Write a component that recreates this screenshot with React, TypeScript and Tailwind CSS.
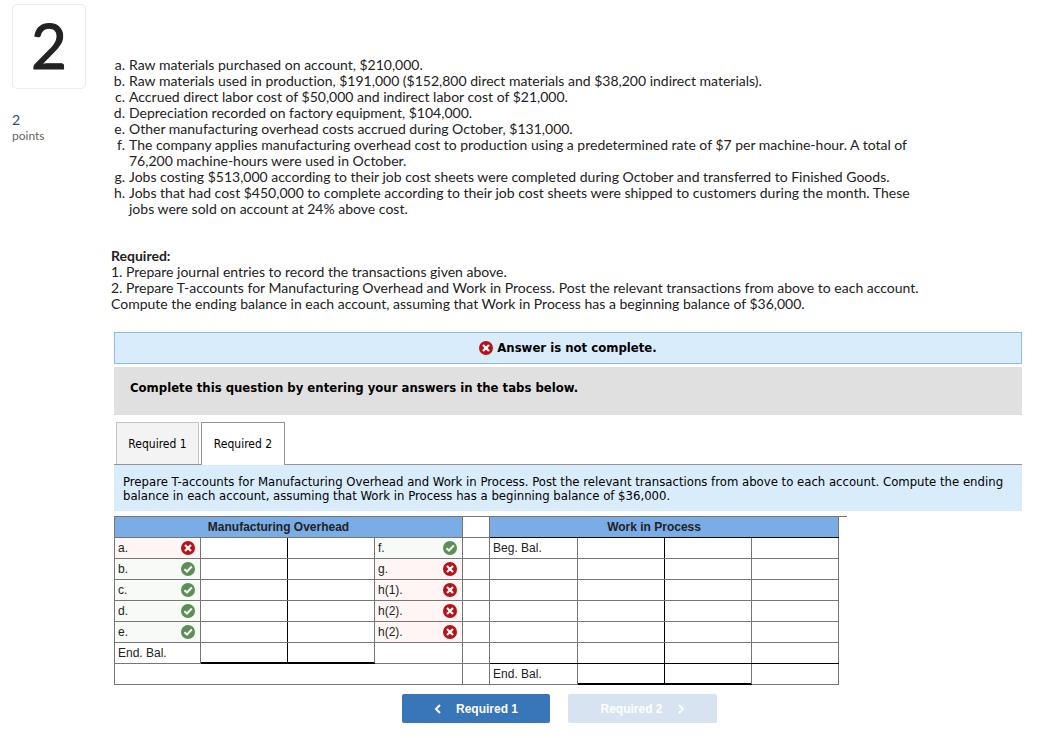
import { clsx } from "clsx";

const transactions = [
  { id: "a", text: "Raw materials purchased on account, $210,000." },
  {
    id: "b",
    text: "Raw materials used in production, $191,000 ($152,800 direct materials and $38,200 indirect materials).",
  },
  {
    id: "c",
    text: "Accrued direct labor cost of $50,000 and indirect labor cost of $21,000.",
  },
  { id: "d", text: "Depreciation recorded on factory equipment, $104,000." },
  {
    id: "e",
    text: "Other manufacturing overhead costs accrued during October, $131,000.",
  },
  {
    id: "f",
    text: "The company applies manufacturing overhead cost to production using a predetermined rate of $7 per machine-hour. A total of 76,200 machine-hours were used in October.",
  },
  {
    id: "g",
    text: "Jobs costing $513,000 according to their job cost sheets were completed during October and transferred to Finished Goods.",
  },
  {
    id: "h",
    text: "Jobs that had cost $450,000 to complete according to their job cost sheets were shipped to customers during the month. These jobs were sold on account at 24% above cost.",
  },
];

const rows = [
  { left: "a.", leftOk: false, right: "f.", rightOk: true, wip: "Beg. Bal." },
  { left: "b.", leftOk: true, right: "g.", rightOk: false, wip: "" },
  { left: "c.", leftOk: true, right: "h(1).", rightOk: false, wip: "" },
  { left: "d.", leftOk: true, right: "h(2).", rightOk: false, wip: "" },
  { left: "e.", leftOk: true, right: "h(2).", rightOk: false, wip: "" },
];

function Mark({ ok }: { ok: boolean }) {
  return (
    <svg
      viewBox="0 0 14 14"
      className="h-3.5 w-3.5 shrink-0"
      role="img"
      aria-label={ok ? "Correct" : "Incorrect"}
    >
      <circle cx="7" cy="7" r="7" fill={ok ? "#5b8f55" : "#b61217"} />
      <path
        d={ok ? "M3.4 7.2 L6 9.5 L10.8 4.5" : "M4 4 L10 10 M10 4 L4 10"}
        fill="none"
        stroke="#fff"
        strokeWidth={ok ? "2" : "2.2"}
      />
    </svg>
  );
}

function GradedCell({ label, ok }: { label: string; ok: boolean }) {
  return (
    <td
      className={clsx(
        "border border-[#767676] pl-[3px] pr-[5px]",
        ok ? "bg-[#f7faf6]" : "bg-[#fff5f4]"
      )}
    >
      <div className="flex items-center justify-between">
        {label}
        <Mark ok={ok} />
      </div>
    </td>
  );
}

function TAccounts() {
  return (
    <table className="w-[732px] table-fixed border-collapse font-['Liberation_Sans',Arial,sans-serif] text-xs text-[#222]">
      <colgroup>
        <col className="w-[86px]" />
        <col className="w-[87px]" />
        <col className="w-[87px]" />
        <col className="w-[88px]" />
        <col className="w-[27px]" />
        <col className="w-[88px]" />
        <col className="w-[87px]" />
        <col className="w-[87px]" />
        <col className="w-[87px]" />
        <col className="w-[8px]" />
      </colgroup>
      <thead>
        <tr className="h-[21px]">
          <th colSpan={4} className="border border-[#767676] bg-[#7aace6] pr-5">
            Manufacturing Overhead
          </th>
          <td className="border border-[#767676]" />
          <th
            colSpan={4}
            className="border border-[#767676] border-b-black bg-[#7aace6] pr-5"
          >
            Work in Process
          </th>
          <td className="border-t border-[#767676]" />
        </tr>
      </thead>
      <tbody>
        {rows.map((row, i) => (
          <tr key={i} className="h-[21px]">
            <GradedCell label={row.left} ok={row.leftOk} />
            <td className="border border-[#767676] border-r-black" />
            <td className="border border-[#767676] border-l-black" />
            <GradedCell label={row.right} ok={row.rightOk} />
            <td className="border border-[#767676]" />
            <td className="border border-[#767676] pl-[3px]">{row.wip}</td>
            <td className="border border-[#767676] border-r-black" />
            <td className="border border-[#767676] border-l-black" />
            <td className="border border-[#767676]" />
            <td />
          </tr>
        ))}
        <tr className="h-[21px]">
          <td className="border border-[#767676] border-t-black pl-[3px]">
            End. Bal.
          </td>
          <td className="border border-black border-l-[#767676] shadow-[inset_0_-1px_0_#000]" />
          <td className="border border-black border-r-[#767676] shadow-[inset_0_-1px_0_#000]" />
          <td className="border border-[#767676] border-t-black" />
          <td className="border border-[#767676]" />
          <td className="border border-[#767676] border-b-black" />
          <td className="border border-[#767676] border-r-black border-b-black" />
          <td className="border border-[#767676] border-l-black border-b-black" />
          <td className="border border-[#767676] border-b-black" />
          <td />
        </tr>
        <tr className="h-[21px]">
          <td colSpan={4} className="border border-[#767676]" />
          <td className="border border-[#767676]" />
          <td className="border border-[#767676] border-t-black pl-[3px]">
            End. Bal.
          </td>
          <td className="border border-black border-l-[#767676] shadow-[inset_0_-1px_0_#000]" />
          <td className="border border-black border-r-[#767676] shadow-[inset_0_-1px_0_#000]" />
          <td className="border border-[#767676] border-t-black" />
          <td />
        </tr>
      </tbody>
    </table>
  );
}

export default function App() {
  return (
    <div className="flex bg-white font-['Lato',sans-serif] text-[#222] [font-variant-ligatures:none]">
      <aside className="w-[111px] shrink-0 pl-3 pt-1">
        <div className="flex h-[85px] w-[74px] items-center justify-center rounded-[5px] border border-[#ececec] pb-1 text-[62px] leading-none [-webkit-text-stroke:1px_#222]">
          2
        </div>
        <div className="pt-[23px] text-sm leading-4 text-[#1f4e84]">2</div>
        <div className="text-xs leading-4 text-[#666]">points</div>
      </aside>

      <main className="min-w-0 flex-1 pb-4 pr-[30px] pt-[57px]">
        <ol className="w-[822px] max-w-full text-sm leading-4">
          {transactions.map((item) => (
            <li key={item.id} className="flex">
              <span className="w-[18px] shrink-0 pr-1 text-right">
                {item.id}.
              </span>
              <span>{item.text}</span>
            </li>
          ))}
        </ol>

        <div className="pt-[31px] text-sm leading-4">
          <p className="font-bold">Required:</p>
          <p>1. Prepare journal entries to record the transactions given above.</p>
          <p className="w-[832px] max-w-full">
            2. Prepare T-accounts for Manufacturing Overhead and Work in
            Process. Post the relevant transactions from above to each account.
            Compute the ending balance in each account, assuming that Work in
            Process has a beginning balance of $36,000.
          </p>
        </div>

        <section className="ml-[3px] mt-5 font-['DejaVu_Sans_Condensed','DejaVu_Sans',Verdana,sans-serif] text-black">
          <div className="flex h-8 items-center justify-center gap-1 border border-[#8fb8e2] bg-[#d9ecfb] text-[13px] font-bold">
            <Mark ok={false} />
            Answer is not complete.
          </div>
          <div className="mt-[3px] h-12 bg-[#e0e0e0] px-4 pt-[13px] text-[13px] leading-4 font-bold">
            Complete this question by entering your answers in the tabs below.
          </div>

          <div
            role="tablist"
            className="mt-[7px] flex gap-0.5 border-b border-[#949494] pl-0.5 text-xs"
          >
            <button
              role="tab"
              aria-selected="false"
              className="h-[42px] w-[83px] border border-b-0 border-[#c4c4c4] bg-[#f3f3f3]"
            >
              Required 1
            </button>
            <button
              role="tab"
              aria-selected="true"
              className="-mb-px h-[43px] w-[84px] border border-b-0 border-[#949494] bg-white"
            >
              Required 2
            </button>
          </div>
          <p className="min-h-[46px] bg-[#d9ecfb] px-[9px] pt-[10px] text-[13px] leading-[14px]">
            Prepare T-accounts for Manufacturing Overhead and Work in Process.
            Post the relevant transactions from above to each account. Compute
            the ending balance in each account, assuming that Work in Process
            has a beginning balance of $36,000.
          </p>

          <div className="pt-[5px]">
            <TAccounts />
          </div>

          <div className="flex justify-center gap-[18px] pr-[17px] pt-[9px] font-['Liberation_Sans',Arial,sans-serif] text-xs font-bold text-white">
            <button className="flex h-[29px] w-[148px] items-center justify-center gap-3.5 rounded-[2px] bg-[#3875b9]">
              <svg
                viewBox="0 0 8 10"
                className="h-2.5 w-2"
                fill="none"
                stroke="currentColor"
                strokeWidth="2"
              >
                <path d="M6 1 L2 5 L6 9" />
              </svg>
              Required 1
            </button>
            <button
              disabled
              className="flex h-[29px] w-[149px] items-center justify-center gap-3.5 rounded-[2px] bg-[#d7e3f1]"
            >
              Required 2
              <svg
                viewBox="0 0 8 10"
                className="h-2.5 w-2"
                fill="none"
                stroke="currentColor"
                strokeWidth="2"
              >
                <path d="M2 1 L6 5 L2 9" />
              </svg>
            </button>
          </div>
        </section>
      </main>
    </div>
  );
}
